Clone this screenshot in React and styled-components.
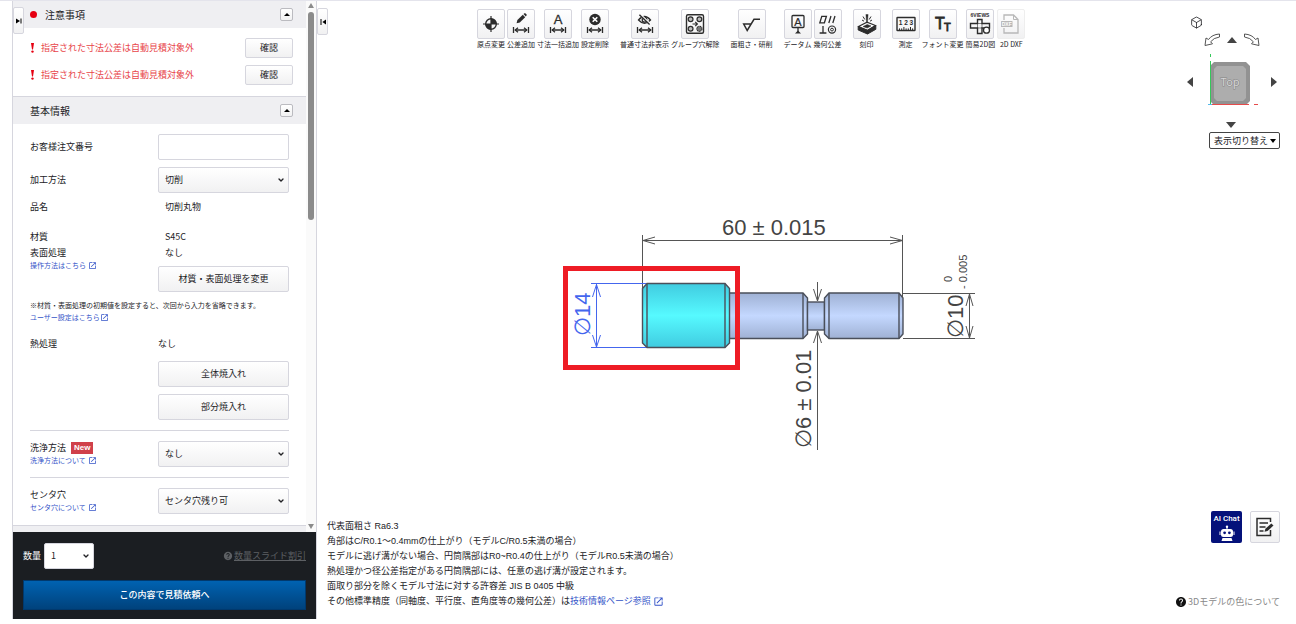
import styled, { createGlobalStyle, css } from 'styled-components';
import { MdOpenInNew, MdHelp } from 'react-icons/md';
import { FiBox, FiChevronDown } from 'react-icons/fi';

const COLOR = {
  text: '#222226',
  line: '#d6d6de',
  head: '#efeff2',
  link: '#3454c8',
  alert: '#e8454a',
  ink: '#2c2c2c',
  dim: '#555555',
  blue: '#4466ee',
};

const NOTICES = ['指定された寸法公差は自動見積対象外', '指定された寸法公差は自動見積対象外'];

const App = () => {
  return (
    <Page>
      <GlobalStyle />
      <Sidebar />
      <Viewer />
    </Page>
  );
};

/* ---------- sidebar ---------- */

const Sidebar = () => (
  <Aside>
    <Handle type="button" aria-label="パネルを開く" $left={0} $top={7}>
      <svg width="6" height="6" viewBox="0 0 6 6">
        <path d="M0 0.5V5.5L4 3Z" />
        <path d="M4.5 0.5H5.5V5.5H4.5Z" />
      </svg>
    </Handle>
    <ScrollArea>
      <ScrollContent>
        <SectionHead>
          <RedDot />
          <SectionTitle>注意事項</SectionTitle>
          <FoldButton />
        </SectionHead>
        <NoticeList>
          {NOTICES.map((text, i) => (
            <Notice key={i}>
              <svg width="3" height="10" viewBox="0 0 3 10" fill="#e60012">
                <path d="M0 0H3L2 6.5H1Z" />
                <circle cx="1.5" cy="8.6" r="1.2" />
              </svg>
              <span>{text}</span>
              <ConfirmButton type="button">確認</ConfirmButton>
            </Notice>
          ))}
        </NoticeList>

        <SectionHead>
          <SectionTitle>基本情報</SectionTitle>
          <FoldButton />
        </SectionHead>
        <Form>
          <Field>
            <FieldLabel htmlFor="orderNo">お客様注文番号</FieldLabel>
            <TextInput id="orderNo" type="text" />
          </Field>
          <Field>
            <FieldLabel htmlFor="method">加工方法</FieldLabel>
            <SelectBox id="method" options={['切削']} />
          </Field>
          <Field>
            <FieldLabel as="span">品名</FieldLabel>
            <Value $indent>切削丸物</Value>
          </Field>

          <MaterialBlock>
            <Stack>
              <Line>材質</Line>
              <Line>表面処理</Line>
              <HelpLink href="#material">
                操作方法はこちら <MdOpenInNew />
              </HelpLink>
            </Stack>
            <Stack>
              <Value $indent>S45C</Value>
              <Value $indent>なし</Value>
              <WideButton type="button">材質・表面処理を変更</WideButton>
            </Stack>
          </MaterialBlock>

          <Hint>
            ※材質・表面処理の初期値を設定すると、次回から入力を省略できます。
            <br />
            <HelpLink href="#user">
              ユーザー設定はこちら
              <MdOpenInNew />
            </HelpLink>
          </Hint>

          <HeatBlock>
            <Line>熱処理</Line>
            <Stack>
              <Value>なし</Value>
              <WideButton type="button">全体焼入れ</WideButton>
              <WideButton type="button">部分焼入れ</WideButton>
            </Stack>
          </HeatBlock>

          <Divider />
          <Field $top>
            <Stack>
              <LabelLine>
                <label htmlFor="wash">洗浄方法</label>
                <NewBadge>New</NewBadge>
              </LabelLine>
              <HelpLink href="#wash">
                洗浄方法について <MdOpenInNew />
              </HelpLink>
            </Stack>
            <SelectBox id="wash" options={['なし']} />
          </Field>
          <Divider />
          <Field $top>
            <Stack>
              <LabelLine>
                <label htmlFor="center">センタ穴</label>
              </LabelLine>
              <HelpLink href="#center">
                センタ穴について <MdOpenInNew />
              </HelpLink>
            </Stack>
            <SelectBox id="center" options={['センタ穴残り可']} />
          </Field>
        </Form>
        <SectionHead />
      </ScrollContent>
      <ScrollBar>
        <svg width="6" height="5" viewBox="0 0 6 5">
          <path d="M3 0L6 5H0Z" />
        </svg>
        <ScrollTrack>
          <ScrollThumb />
        </ScrollTrack>
        <svg width="6" height="5" viewBox="0 0 6 5">
          <path d="M3 5L6 0H0Z" />
        </svg>
      </ScrollBar>
    </ScrollArea>

    <OrderBar>
      <QuantityRow>
        <label htmlFor="quantity">数量</label>
        <QuantityBox>
          <SelectBox id="quantity" options={['1']} plain />
        </QuantityBox>
        <DiscountLink href="#discount">
          <MdHelp />
          <u>数量スライド割引</u>
        </DiscountLink>
      </QuantityRow>
      <SubmitButton type="button">この内容で見積依頼へ</SubmitButton>
    </OrderBar>
  </Aside>
);

const FoldButton = () => (
  <Fold type="button" aria-label="折りたたむ">
    <svg width="6" height="3" viewBox="0 0 6 3">
      <path d="M3 0L6 3H0Z" />
    </svg>
  </Fold>
);

const SelectBox = ({ id, options, plain }) => (
  <SelectWrap>
    <Select id={id} $plain={plain}>
      {options.map((o) => (
        <option key={o}>{o}</option>
      ))}
    </Select>
    <FiChevronDown />
  </SelectWrap>
);

/* ---------- toolbar icons ---------- */

const DimensionArrow = () => (
  <g fill="none" strokeWidth="1.3">
    <path d="M5.5 17V23M20.5 17V23M7 20H19" />
    <path d="M10 17.7L7.2 20L10 22.3M16 17.7L18.8 20L16 22.3" />
  </g>
);

const ICONS = {
  origin: (
    <>
      <circle cx="13" cy="14" r="5.3" fill="none" strokeWidth="1.4" />
      <path d="M13 14V8.5A5.5 5.5 0 0 1 18.5 14ZM13 14V19.5A5.5 5.5 0 0 1 7.5 14Z" stroke="none" />
      <path d="M13 6V22M5 14H21" strokeWidth="1.2" />
    </>
  ),
  tolerance: (
    <>
      <path d="M8.6 13.2L9.4 10L14.8 4.8L17.2 7.2L11.8 12.4Z" stroke="none" />
      <path d="M15.5 4.1L16.4 3.3Q17 2.9 17.7 3.5L18.6 4.4Q19 5 18.5 5.6L17.8 6.4Z" stroke="none" />
      <DimensionArrow />
    </>
  ),
  batch: (
    <>
      <text x="13" y="13.5" textAnchor="middle" fontSize="13" strokeWidth="0.3">A</text>
      <DimensionArrow />
    </>
  ),
  remove: (
    <>
      <circle cx="13" cy="9.5" r="5.7" stroke="none" />
      <path d="M10.7 7.2L15.3 11.8M15.3 7.2L10.7 11.8" stroke="#fff" strokeWidth="1.6" />
      <DimensionArrow />
    </>
  ),
  hide: (
    <>
      <path d="M6.5 10Q12.5 3 18.5 10Q12.5 16.5 6.5 10Z" fill="none" strokeWidth="1.3" />
      <circle cx="12.5" cy="9.8" r="2.3" fill="none" strokeWidth="1.3" />
      <path d="M7.8 4.2L18 14" stroke="#fff" strokeWidth="2.2" />
      <path d="M7.4 4.8L17.6 14.6" strokeWidth="1.4" />
      <DimensionArrow />
    </>
  ),
  ungroup: (
    <>
      <rect x="4.5" y="4.8" width="17" height="18.5" rx="1.5" fill="none" strokeWidth="1.4" />
      <g fill="#bbb" strokeWidth="1.2">
        <circle cx="8.6" cy="9.2" r="2.4" />
        <circle cx="17.4" cy="9.2" r="2.4" />
        <circle cx="8.6" cy="18.8" r="2.4" />
      </g>
      <circle cx="17.4" cy="18.8" r="2.6" fill="#777" strokeWidth="1.1" strokeDasharray="1.2 0.6" />
      <path d="M10.5 14H15M13.2 11.8L15.4 14L13.2 16.2" fill="none" strokeWidth="1.2" />
    </>
  ),
  roughness: <path d="M12 14H4.7L8.2 20.5L15 9.3H21" fill="none" strokeWidth="1.5" />,
  datum: (
    <>
      <rect x="7" y="5.5" width="12" height="12" rx="1" fill="none" strokeWidth="1.3" />
      <text x="13" y="15.5" textAnchor="middle" fontSize="11" strokeWidth="0.2">A</text>
      <path d="M13 18V22" strokeWidth="1.3" />
      <path d="M10 23.5L13 20.5L16 23.5Z" stroke="none" />
    </>
  ),
  geometry: (
    <>
      <path d="M6.8 6.3H11.4L9.4 12.8H4.8ZM13.8 13L16 6M17.8 13L20 6" fill="none" strokeWidth="1.3" />
      <path d="M8 16V23M4.6 23H11.4" strokeWidth="1.3" />
      <circle cx="17" cy="19.6" r="3.6" fill="none" strokeWidth="1.2" />
      <circle cx="17" cy="19.6" r="1.4" fill="none" strokeWidth="1" />
    </>
  ),
  engrave: (
    <>
      <path d="M4.5 16.5L13 12.2L21.5 15.5L13.5 20.2Z" fill="#fff" strokeWidth="1.2" />
      <path d="M4.2 16.8L13.5 20.5V24L4.2 20ZM13.5 20.5L21.8 15.8V19.3L13.5 24Z" />
      <path d="M9 16.6L13.2 14.5L17 15.9L13.2 18.1Z" strokeWidth="0.5" />
      <path d="M11.9 4.5H14.1L13.4 13H12.6Z" strokeWidth="0.4" />
      <path d="M9 6.5L10.8 9.5M17 6.5L15.2 9.5M8 10L10 11.2M18 10L16 11.2" strokeWidth="1" />
    </>
  ),
  measure: (
    <>
      <rect x="4" y="7.5" width="18" height="13" rx="0.5" fill="none" strokeWidth="1.4" />
      <text x="13" y="15.3" textAnchor="middle" fontSize="6.5" fontWeight="700" stroke="none">1 2 3</text>
      <path d="M6.5 20.5V18.4M8.7 20.5V18.4M10.9 20.5V17M13.1 20.5V18.4M15.3 20.5V18.4M17.5 20.5V17M19.6 20.5V18.4" strokeWidth="1" />
    </>
  ),
  font: (
    <>
      <text x="5" y="19" fontSize="16" strokeWidth="0.8">T</text>
      <text x="14" y="20.5" fontSize="11" strokeWidth="0.8">T</text>
    </>
  ),
  views: (
    <>
      <text x="13" y="6.8" textAnchor="middle" fontSize="5" fontWeight="700" stroke="none">6VIEWS</text>
      <path d="M10.5 9.5H15V13.5H22.5V18H15V23.5H10.5V18H3.5V13.5H10.5Z" fill="none" strokeWidth="1.4" />
      <path d="M10.5 13.5H15V18H10.5Z" fill="none" strokeWidth="0.6" />
      <circle cx="19.5" cy="20.2" r="3" fill="#fff" strokeWidth="1.3" />
    </>
  ),
  dxf: (
    <>
      <path d="M6 10V5H15.5L20 9.5V23H6V18" fill="none" strokeWidth="1.3" />
      <path d="M15.5 5V9.5H20" fill="none" strokeWidth="1" />
      <rect x="3" y="11" width="11.5" height="6" rx="0.5" stroke="none" />
      <text x="8.7" y="15.8" textAnchor="middle" fontSize="5" fontWeight="700" fill="#fff" stroke="none">DXF</text>
    </>
  ),
};

const TOOL_GROUPS = [
  [
    { icon: 'origin', label: '原点変更' },
    { icon: 'tolerance', label: '公差追加' },
    { icon: 'batch', label: '寸法一括追加' },
    { icon: 'remove', label: '設定削除' },
  ],
  [
    { icon: 'hide', label: '普通寸法非表示' },
    { icon: 'ungroup', label: 'グループ穴解除' },
  ],
  [{ icon: 'roughness', label: '面粗さ・研削' }],
  [
    { icon: 'datum', label: 'データム' },
    { icon: 'geometry', label: '幾何公差' },
  ],
  [{ icon: 'engrave', label: '刻印' }],
  [
    { icon: 'measure', label: '測定' },
    { icon: 'font', label: 'フォント変更' },
    { icon: 'views', label: '簡易2D図' },
    { icon: 'dxf', label: '2D DXF', disabled: true },
  ],
];

/* ---------- viewer ---------- */

const Viewer = () => (
  <Main>
    <Handle type="button" aria-label="パネルを閉じる" $left={0} $top={8}>
      <svg width="6" height="6" viewBox="0 0 6 6">
        <path d="M0.5 0H1.5V6H0.5Z" />
        <path d="M6 0.5V5.5L2.4 3Z" />
      </svg>
    </Handle>
    <Toolbar>
      {TOOL_GROUPS.map((group, i) => (
        <ToolGroup key={i}>
          {group.map(({ icon, label, disabled }) => (
            <Tool key={icon}>
              <ToolButton type="button" aria-label={label} disabled={disabled}>
                <svg width="26" height="28" viewBox="0 0 26 28">{ICONS[icon]}</svg>
              </ToolButton>
              <span>{label}</span>
            </Tool>
          ))}
        </ToolGroup>
      ))}
    </Toolbar>
    <ViewControl />
    <Stage>
      <Drawing />
    </Stage>
    <BottomRow>
      <Notes>
        代表面粗さ Ra6.3
        <br />
        角部はC/R0.1～0.4mmの仕上がり（モデルC/R0.5未満の場合）
        <br />
        モデルに逃げ溝がない場合、円筒隅部はR0~R0.4の仕上がり（モデルR0.5未満の場合）
        <br />
        熱処理かつ径公差指定がある円筒隅部には、任意の逃げ溝が設定されます。
        <br />
        面取り部分を除くモデル寸法に対する許容差 JIS B 0405 中級
        <br />
        その他標準精度（同軸度、平行度、直角度等の幾何公差）は
        <a href="#tech">
          技術情報ページ参照 <MdOpenInNew />
        </a>
      </Notes>
      <Support>
        <SupportButtons>
          <ChatButton type="button">
            AI Chat
            <svg width="16" height="16" viewBox="0 0 16 16" fill="#fff">
              <path d="M7.5 2H8.5V5H7.5Z" />
              <circle cx="8" cy="1.8" r="1.2" />
              <rect x="2" y="4" width="12" height="8" rx="2.5" />
              <path d="M0.5 6.5H1.5V10H0.5ZM14.5 6.5H15.5V10H14.5ZM3.5 13H12.5L13.5 16H2.5Z" />
              <circle cx="5.6" cy="7.8" r="1.4" fill="#04117a" />
              <circle cx="10.4" cy="7.8" r="1.4" fill="#04117a" />
            </svg>
          </ChatButton>
          <MemoButton type="button" aria-label="メモ">
            <svg width="20" height="20" viewBox="0 0 20 20">
              <path d="M15.5 5V1.5H2V18.5H15.5V13" fill="none" stroke="#2c2c2c" strokeWidth="1.5" />
              <path d="M4.5 6H13M4.5 10H10.5M4.5 14H8.5" stroke="#2c2c2c" strokeWidth="1.4" />
              <path d="M9.5 14.8L10.4 11.8L16.3 6.4L18.5 8.5L12.5 14Z" fill="#2c2c2c" />
            </svg>
          </MemoButton>
        </SupportButtons>
        <ColorLink href="#color">
          <MdHelp />
          3Dモデルの色について
        </ColorLink>
      </Support>
    </BottomRow>
  </Main>
);

const ViewControl = () => (
  <ViewPanel>
    <HomeButton type="button" aria-label="等角図">
      <FiBox />
    </HomeButton>
    <TurnRow>
      <BareButton type="button" aria-label="左回転">
        <svg width="17" height="14" viewBox="0 0 17 14" fill="#fff" stroke="#555">
          <path d="M15.5 1Q8 1.5 4.5 6.5L2 5L1 12.5L8.5 10.8L6.6 8.8Q9.5 4.8 15.5 4Z" />
        </svg>
      </BareButton>
      <BareButton type="button" aria-label="上">
        <svg width="10" height="6" viewBox="0 0 10 6">
          <path d="M5 0L10 6H0Z" />
        </svg>
      </BareButton>
      <BareButton type="button" aria-label="右回転">
        <svg width="17" height="14" viewBox="0 0 17 14" fill="#fff" stroke="#555">
          <path d="M1.5 1Q9 1.5 12.5 6.5L15 5L16 12.5L8.5 10.8L10.4 8.8Q7.5 4.8 1.5 4Z" />
        </svg>
      </BareButton>
    </TurnRow>
    <CubeRow>
      <BareButton type="button" aria-label="左">
        <svg width="6" height="10" viewBox="0 0 6 10">
          <path d="M0 5L6 0V10Z" />
        </svg>
      </BareButton>
      <svg width="54" height="56" viewBox="-4 0 54 56">
        <path d="M5 8H37L41 12V47L37 51H5L1 47V12Z" fill="#929292" />
        <path d="M8 12H34L37 15V44L34 47H8L5 44V15Z" fill="#adadad" />
        <text x="21" y="32" textAnchor="middle" fontSize="11" fill="#d6d6d6" stroke="#858585" strokeWidth="1" paintOrder="stroke">
          Top
        </text>
        <path d="M1.5 0V3M1.5 7V50" stroke="#35c85a" fill="none" />
        <path d="M2 50.5H40M45 50.5H49" stroke="#e64b4b" fill="none" />
        <path d="M-1 50.5H3" stroke="#55b8e8" fill="none" />
      </svg>
      <BareButton type="button" aria-label="右">
        <svg width="6" height="10" viewBox="0 0 6 10">
          <path d="M6 5L0 0V10Z" />
        </svg>
      </BareButton>
    </CubeRow>
    <DownButton type="button" aria-label="下">
      <svg width="10" height="6" viewBox="0 0 10 6">
        <path d="M5 6L10 0H0Z" />
      </svg>
    </DownButton>
    <ViewSelectWrap>
      <ViewSelect aria-label="表示切り替え">
        <option>表示切り替え</option>
      </ViewSelect>
      <svg width="6" height="4" viewBox="0 0 6 4">
        <path d="M3 4L6 0H0Z" />
      </svg>
    </ViewSelectWrap>
  </ViewPanel>
);

const Drawing = () => (
  <svg width="420" height="240" viewBox="560 214 420 240">
    <defs>
      <linearGradient id="steel" x1="0" y1="0" x2="0" y2="1">
        <stop offset="0" stopColor="#9fb1d4" />
        <stop offset="0.5" stopColor="#c4d8ff" />
        <stop offset="1" stopColor="#9fb1d4" />
      </linearGradient>
      <linearGradient id="cyan" x1="0" y1="0" x2="0" y2="1">
        <stop offset="0" stopColor="#40cbe0" />
        <stop offset="0.5" stopColor="#56faff" />
        <stop offset="1" stopColor="#40cbe0" />
      </linearGradient>
    </defs>

    {/* shaft */}
    <g stroke="#4a4f5a" strokeWidth="1.4">
      <path d="M728 293H803L807.500 298V334L803 338.500H728Z" fill="url(#steel)" />
      <path d="M803 293V338.500" />
      <rect x="807.5" y="302" width="17" height="28" fill="url(#steel)" />
      <path d="M829 293H899L903 298V334L899 338.500H829L824.500 334V298Z" fill="url(#steel)" />
      <path d="M829 293V338.500M899 293V338.500" />
      <path d="M647 283.500H725L729.500 288.500V343L725 347.500H647L642.500 343V288.500Z" fill="url(#cyan)" />
      <path d="M647 283.500V347.500M725 283.500V347.500" />
    </g>

    {/* dimension lines */}
    <g fill="none" stroke={COLOR.dim}>
      <path d="M642.500 235V288M902.500 235V298M643 240.500H903" />
      <path d="M655 237L643 240.500L655 244M890 237L902.500 240.500L890 244" />
      <path d="M903 293.500H975M903 338.500H975M969.500 294V338" />
      <path d="M966 306L969.500 294L973 306M966 326L969.500 338L973 326" />
      <path d="M817.500 282V301M817.500 331V450" />
      <path d="M813.500 289L817.500 301L821.500 289M813.500 343L817.500 331L821.500 343" />
    </g>
    <g fill="none" stroke={COLOR.blue}>
      <path d="M591 283.500H646M591 347.500H646M596.500 284V347" />
      <path d="M592.500 297L596.500 284.500L600.500 297M592.500 335L596.500 347L600.500 335" />
    </g>

    {/* dimension texts */}
    <g fill="#444444" fontSize="22">
      <text x="722" y="235">60 ± 0.015</text>
      <text transform="translate(811 448) rotate(-90)">∅6 ± 0.01</text>
      <text transform="translate(963 338) rotate(-90)">∅10</text>
      <text transform="translate(952 282) rotate(-90)" fontSize="11">0</text>
      <text transform="translate(967 289) rotate(-90)" fontSize="11">- 0.005</text>
      <text transform="translate(590 336) rotate(-90)" fill={COLOR.blue}>∅14</text>
    </g>

    <rect x="565.5" y="268.500" width="172" height="99" fill="none" stroke="#ee1c25" strokeWidth="5" />
  </svg>
);

/* ---------- styles ---------- */

const GlobalStyle = createGlobalStyle`
  * {
    box-sizing: border-box;
  }
  body {
    margin: 0;
    background: #fff;
    color: ${COLOR.text};
    font-family: 'Noto Sans CJK JP', 'Noto Sans', sans-serif;
    font-size: 9px;
    line-height: 14px;
  }
  button, input, select {
    font: inherit;
    color: inherit;
    margin: 0;
    padding: 0;
  }
  a {
    color: ${COLOR.link};
    text-decoration: none;
  }
  svg {
    display: block;
    flex: none;
  }
`;

const Page = styled.div`
  display: flex;
  height: 100vh;
  padding: 0 0 5px 12px;
  border-top: 1px solid #e4e4ec;
`;

const raised = css`
  border: 1px solid ${COLOR.line};
  border-radius: 2px;
  background: linear-gradient(#ffffff, #f1f1f2);
`;

const Aside = styled.aside`
  position: relative;
  display: flex;
  flex-direction: column;
  flex: none;
  width: 304px;
  border-left: 1px solid ${COLOR.line};
`;

const Handle = styled.button`
  position: absolute;
  z-index: 2;
  left: ${({ $left }) => $left}px;
  top: ${({ $top }) => $top - 1}px;
  display: flex;
  align-items: center;
  justify-content: center;
  width: 11px;
  height: 27px;
  ${raised}
`;

const ScrollArea = styled.div`
  display: flex;
  flex: 1;
  min-height: 0;
  overflow: hidden;
`;

const ScrollContent = styled.div`
  flex: 1;
`;

const ScrollBar = styled.div`
  display: flex;
  flex-direction: column;
  align-items: center;
  flex: none;
  width: 10px;
  padding: 2px 0 3px;
  background: #fafafa;
  fill: #8b8b8b;
`;

const ScrollTrack = styled.div`
  flex: 1;
  width: 6px;
  padding: 4px 0;
`;

const ScrollThumb = styled.div`
  height: 41%;
  border-radius: 3px;
  background: #8b8b8b;
`;

const SectionHead = styled.div`
  display: flex;
  align-items: center;
  height: 28px;
  padding: 0 13px 0 17px;
  background: ${COLOR.head};
  border-top: 1px solid ${COLOR.line};
  &:first-child {
    height: 27px;
    border-top: none;
  }
`;

const SectionTitle = styled.h2`
  flex: 1;
  margin: 0;
  font-size: 10px;
  font-weight: 400;
  line-height: 14px;
`;

const RedDot = styled.i`
  width: 7px;
  height: 7px;
  margin-right: 8px;
  border-radius: 50%;
  background: #e60012;
`;

const Fold = styled.button`
  display: flex;
  align-items: center;
  justify-content: center;
  width: 13px;
  height: 13px;
  ${raised}
  border-color: #bbbbc0;
`;

const NoticeList = styled.ul`
  display: flex;
  flex-direction: column;
  gap: 7px;
  margin: 0;
  padding: 10px 13px 11px 18px;
  list-style: none;
`;

const Notice = styled.li`
  display: flex;
  align-items: center;
  gap: 7px;
  color: ${COLOR.alert};
`;

const ConfirmButton = styled.button`
  width: 48px;
  height: 20px;
  margin-left: auto;
  color: ${COLOR.text};
  ${raised}
`;

const Form = styled.div`
  display: flex;
  flex-direction: column;
  padding: 10px 17px 11px;
`;

const Field = styled.div`
  display: grid;
  grid-template-columns: 128px 1fr;
  align-items: ${({ $top }) => ($top ? 'start' : 'center')};
  margin-bottom: ${({ $top }) => ($top ? 0 : 7)}px;
`;

const FieldLabel = styled.label`
  line-height: 14px;
`;

const Value = styled.span`
  padding-left: ${({ $indent }) => ($indent ? 7 : 0)}px;
  line-height: 14px;
`;

const Line = styled.span`
  line-height: 14px;
`;

const Stack = styled.div`
  display: flex;
  flex-direction: column;
`;

const TextInput = styled.input`
  width: 100%;
  height: 26px;
  padding: 0 6px;
  border: 1px solid ${COLOR.line};
  border-radius: 2px;
`;

const SelectWrap = styled.div`
  position: relative;
  svg {
    position: absolute;
    right: 4px;
    top: 9px;
    font-size: 8px;
    stroke-width: 4;
    pointer-events: none;
  }
`;

const Select = styled.select`
  width: 100%;
  height: 26px;
  padding: 0 6px;
  appearance: none;
  ${raised}
  ${({ $plain }) => $plain && 'background: #fff;'}
`;

const WideButton = styled.button`
  width: 100%;
  height: 26px;
  ${raised}
`;

const MaterialBlock = styled.div`
  display: grid;
  grid-template-columns: 128px 1fr;
  margin-top: 9px;
  ${Line}:first-child, ${Value}:first-child {
    margin-bottom: 2px;
  }
  ${WideButton} {
    margin-top: 6px;
  }
`;

const HelpLink = styled.a`
  display: flex;
  align-items: center;
  gap: 2px;
  font-size: 7px;
  line-height: 10px;
  svg {
    font-size: 9px;
  }
`;

const Hint = styled.p`
  margin: 7px 0 14px;
  font-size: 7px;
  line-height: 12px;
  white-space: nowrap;
  ${HelpLink} {
    gap: 0;
    line-height: 12px;
  }
`;

const HeatBlock = styled.div`
  display: grid;
  grid-template-columns: 128px 1fr;
  align-items: start;
  ${Value} {
    margin-bottom: 3px;
  }
  ${WideButton} {
    margin-top: 7px;
  }
`;

const Divider = styled.hr`
  width: 100%;
  height: 1px;
  margin: 10px 0;
  border: none;
  background: ${COLOR.line};
`;

const LabelLine = styled.div`
  display: flex;
  align-items: center;
  gap: 5px;
  line-height: 14px;
`;

const NewBadge = styled.span`
  padding: 0 3px;
  background: #d0404a;
  color: #fff;
  font-family: 'Liberation Sans', sans-serif;
  font-size: 8px;
  font-weight: 700;
  line-height: 12px;
`;

const OrderBar = styled.div`
  display: flex;
  flex-direction: column;
  gap: 11px;
  padding: 11px 10px 9px;
  background: #1b1e22;
`;

const QuantityRow = styled.div`
  display: flex;
  align-items: center;
  gap: 3px;
  color: #fff;
`;

const QuantityBox = styled.div`
  width: 50px;
  color: ${COLOR.text};
`;

const DiscountLink = styled.a`
  display: flex;
  align-items: center;
  gap: 1px;
  margin-left: auto;
  color: #5d6064;
  svg {
    font-size: 10px;
  }
`;

const SubmitButton = styled.button`
  height: 30px;
  border: 1px solid #00396e;
  background: linear-gradient(#0062b1, #00427c);
  color: #fff;
  font-weight: 500;
`;

const Main = styled.main`
  position: relative;
  display: flex;
  flex-direction: column;
  flex: 1;
  min-width: 0;
  border-left: 1px solid ${COLOR.line};
`;

const Toolbar = styled.div`
  display: flex;
  gap: 11px;
  padding: 8px 0 0 160px;
`;

const ToolGroup = styled.div`
  display: flex;
  gap: 2px;
`;

const Tool = styled.div`
  display: flex;
  flex-direction: column;
  align-items: center;
  font-size: 7px;
  line-height: 11px;
  white-space: nowrap;
`;

const ToolButton = styled.button`
  width: 28px;
  height: 30px;
  ${raised}
  svg {
    fill: ${COLOR.ink};
    stroke: ${COLOR.ink};
    font-family: 'Liberation Sans', sans-serif;
  }
  &:disabled {
    border-color: #eeeeee;
    svg {
      fill: #b8b8b8;
      stroke: #b8b8b8;
    }
  }
`;

const ViewPanel = styled.div`
  position: absolute;
  right: 16px;
  top: 15px;
  display: flex;
  flex-direction: column;
  width: 93px;
`;

const BareButton = styled.button`
  border: none;
  background: none;
  svg {
    fill: #444;
  }
  svg[stroke] {
    fill: #fff;
  }
`;

const HomeButton = styled(BareButton)`
  align-self: flex-start;
  margin-left: 3px;
  svg[stroke] {
    font-size: 13px;
    fill: none;
    stroke-width: 1.5;
  }
`;

const TurnRow = styled.div`
  display: flex;
  align-items: center;
  justify-content: center;
  gap: 6px;
  margin: 4px 4px 7px 0;
`;

const CubeRow = styled.div`
  display: flex;
  align-items: center;
  justify-content: space-between;
  padding-right: 3px;
`;

const DownButton = styled(BareButton)`
  align-self: center;
  margin: 12px 5px 4px 0;
`;

const ViewSelectWrap = styled.div`
  position: relative;
  align-self: flex-end;
  width: 71px;
  svg {
    position: absolute;
    right: 4px;
    top: 7px;
    pointer-events: none;
  }
`;

const ViewSelect = styled.select`
  display: block;
  width: 100%;
  height: 17px;
  padding-left: 4px;
  appearance: none;
  background: #fff;
  border: 1px solid #444;
  border-radius: 2px;
`;

const Stage = styled.div`
  display: flex;
  align-items: center;
  justify-content: center;
  flex: 1;
  padding: 106px 73px 0 0;
  font-family: 'Liberation Sans', sans-serif;
`;

const BottomRow = styled.div`
  display: flex;
  align-items: flex-end;
  justify-content: space-between;
  padding: 0 16px 10px 10px;
`;

const Notes = styled.p`
  margin: 0;
  font-family: 'Liberation Sans', 'Noto Sans CJK JP', sans-serif;
  line-height: 15px;
  svg {
    display: inline-block;
    vertical-align: middle;
    font-size: 11px;
  }
`;

const Support = styled.div`
  display: flex;
  flex-direction: column;
  align-items: flex-end;
  gap: 52px;
`;

const SupportButtons = styled.div`
  display: flex;
  gap: 8px;
`;

const ChatButton = styled.button`
  display: flex;
  flex-direction: column;
  align-items: center;
  justify-content: space-between;
  width: 31px;
  height: 32px;
  padding: 3px 0 2px;
  border: none;
  border-radius: 2px;
  background: #04117a;
  color: #fff;
  font-family: Roboto, sans-serif;
  font-size: 8px;
  font-weight: 500;
  line-height: 10px;
  white-space: nowrap;
`;

const MemoButton = styled.button`
  display: flex;
  align-items: center;
  justify-content: center;
  width: 30px;
  height: 32px;
  ${raised}
`;

const ColorLink = styled.a`
  display: flex;
  align-items: center;
  gap: 1px;
  color: #888;
  svg {
    font-size: 12px;
    color: #111;
  }
`;

export default App;
